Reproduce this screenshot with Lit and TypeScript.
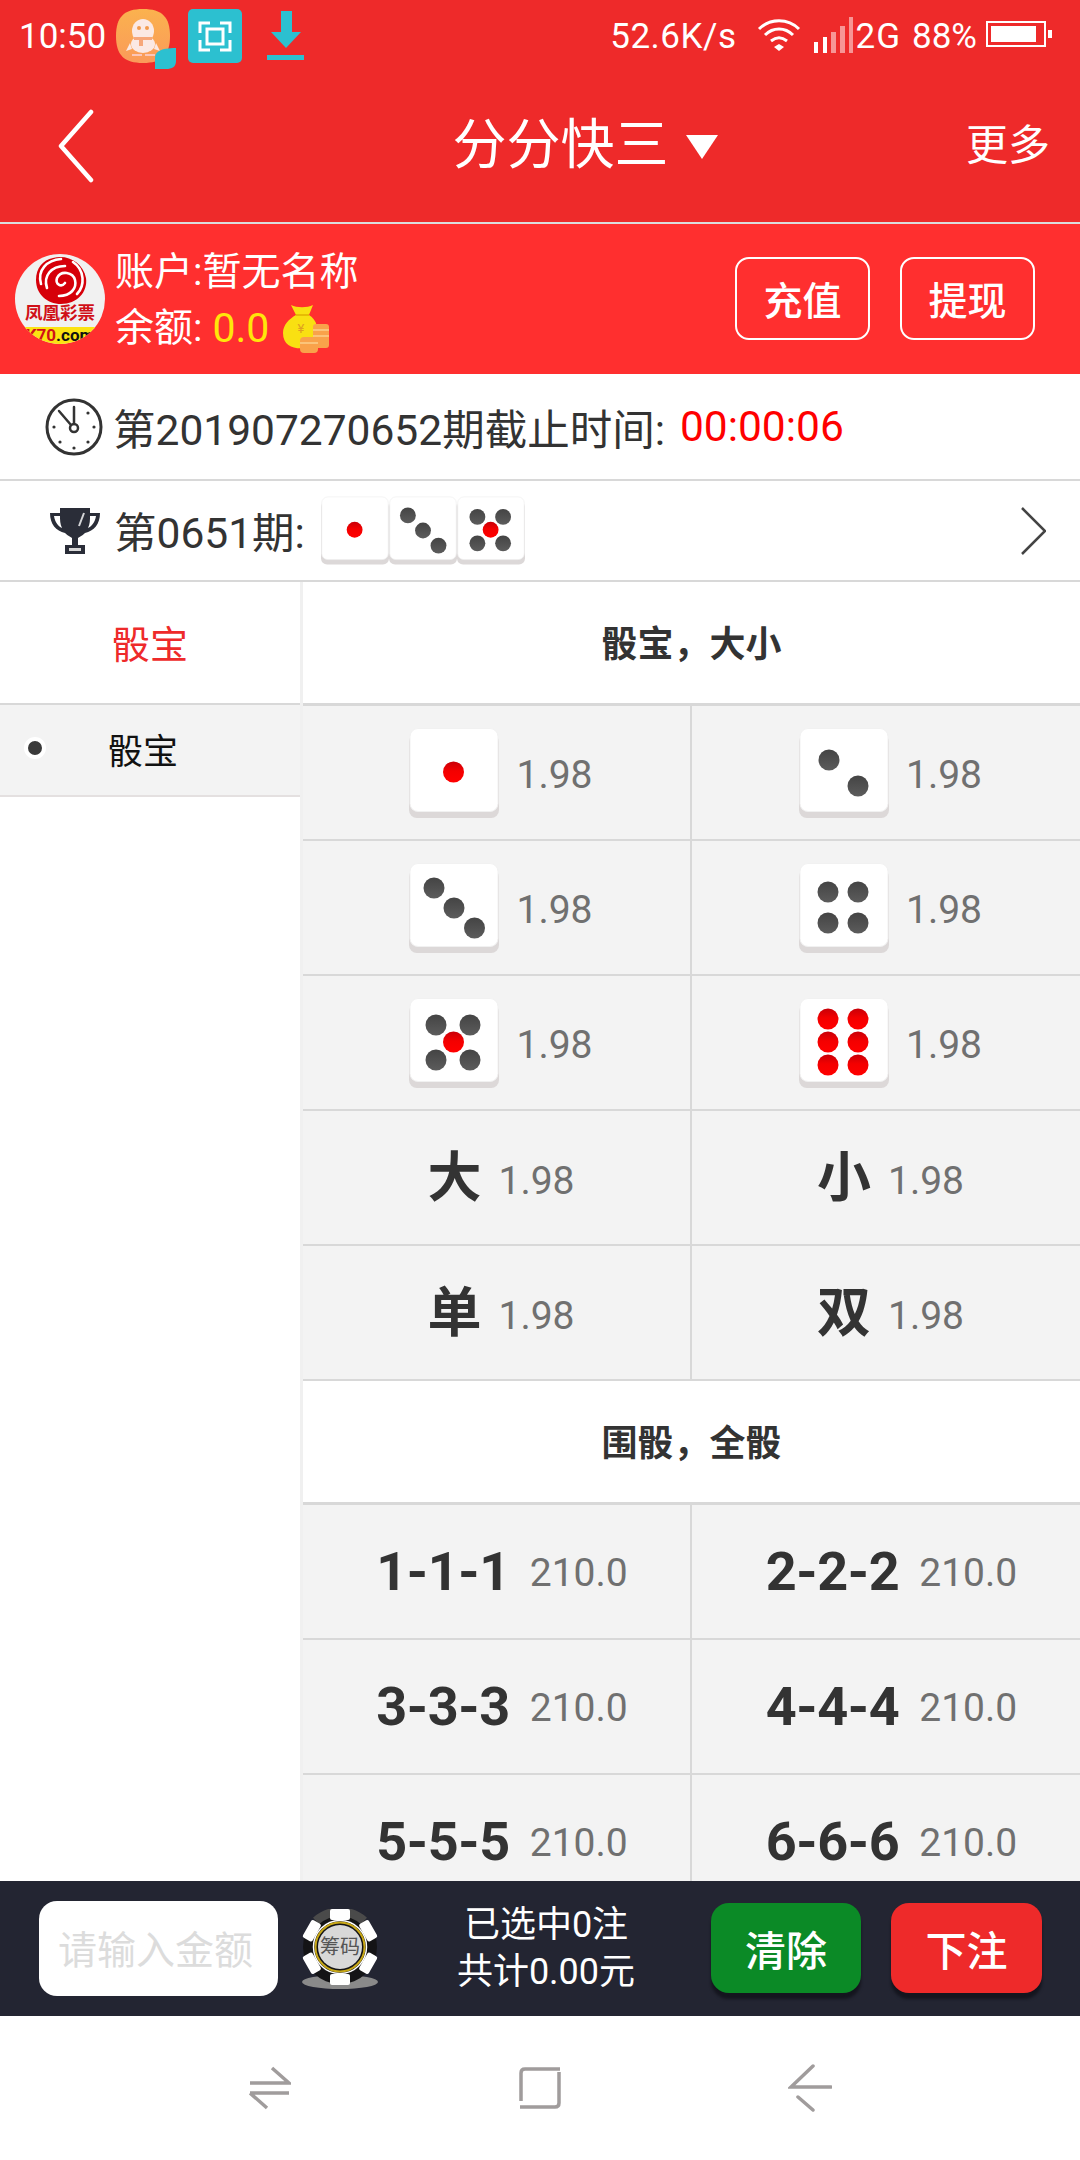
import { LitElement, html, css, svg } from "lit";
import { customElement } from "lit/decorators.js";

const PIPS: Record<number, [number, number, boolean][]> = {
  1: [[44.5, 44, true]],
  2: [[30, 32, false], [59, 58, false]],
  3: [[25, 25, false], [45, 45, false], [65.5, 65, false]],
  4: [[29, 29, false], [59, 29, false], [29, 60, false], [59, 60, false]],
  5: [[27, 27, false], [61, 27, false], [44.5, 44, true], [27, 62, false], [61, 62, false]],
  6: [[29, 21, true], [59, 21, true], [29, 44, true], [59, 44, true], [29, 67, true], [59, 67, true]],
};

function die(n: number, cls: string) {
  return html`<svg class=${cls} viewBox="0 0 90 90" aria-hidden="true">
    <defs>
      <linearGradient id="pr" x1="0" y1="0" x2="0" y2="1"><stop offset="0" stop-color="#c80008"/><stop offset=".45" stop-color="#f40000"/><stop offset="1" stop-color="#ff0000"/></linearGradient>
      <linearGradient id="pd" x1="0" y1="0" x2="0" y2="1"><stop offset="0" stop-color="#444"/><stop offset="1" stop-color="#5c5c5c"/></linearGradient>
    </defs>
    <rect x="0" y="6" width="90" height="84" rx="8" fill="#dcd8d8"/>
    <rect x="1" y="0.5" width="88" height="83" rx="8" fill="#fff" stroke="#f1f1f1"/>
    ${PIPS[n].map(([x, y, red]) => svg`<circle cx=${x} cy=${y} r="10.5" fill=${red ? "url(#pr)" : "url(#pd)"}/>`)}
  </svg>`;
}

const CHIP_NOTCH = [0, 60, 120, 180, 240, 300];

@customElement("app-root")
export class AppRoot extends LitElement {
  static styles = css`
    :host {
      display: block;
      width: 1080px;
      height: 2160px;
      font-family: Roboto, "Noto Sans CJK SC", sans-serif;
      color: #333;
      background: #fff;
      overflow: hidden;
    }
    .app { display: flex; flex-direction: column; height: 2160px; }
    svg { display: block; flex: none; }

    .top { background: #ee2a2a; border-bottom: 2px solid #dcdcdc; color: #fff; height: 222px; flex: none; }
    .status { display: flex; align-items: center; height: 70px; padding: 0 28px 0 19px; font-size: 35px; }
    .time { width: 86px; margin-top: 4px; line-height: 40px; }
    .qq { margin-left: 11px; margin-top: 8px; }
    .scan { margin-left: 12px; margin-top: 2px; }
    .dl { margin-left: 25px; margin-top: 4px; }
    .st-right { margin-left: auto; display: flex; align-items: center; line-height: 40px; padding-top: 4px; }
    .speed { letter-spacing: 0.5px; }
    .wifi { margin-left: 20px; margin-top: -6px; }
    .sig { margin-left: 13px; margin-top: -4px; }
    .g2 { margin-left: 3px; letter-spacing: 1px; }
    .pct { margin-left: 11px; }
    .batt { margin-left: 9px; margin-top: -6px; }

    .bar { display: grid; grid-template-columns: 1fr auto 1fr; align-items: center; height: 152px; padding: 0 30px 14px 58px; }
    .title { display: flex; align-items: center; font-size: 54px; line-height: 70px; margin-left: 62px; }
    .tri { margin-left: 17px; margin-top: 2px; }
    .more { justify-self: end; font-size: 42px; line-height: 56px; }

    .acct { flex: none; height: 150px; background: #ff2f2f; color: #fff; display: flex; align-items: center; padding: 0 45px 0 15px; box-sizing: border-box; }
    .acct-text { margin-left: 10px; font-size: 39px; line-height: 56px; margin-top: 2px; }
    .bal { display: flex; align-items: center; }
    .bal b { font-weight: 400; color: #ffe60a; margin-left: 10px; font-size: 41px; }
    .bag { margin-left: 14px; margin-top: 2px; }
    .acct-btns { margin-left: auto; display: flex; gap: 30px; margin-top: -2px; }
    .outline { width: 135px; height: 83px; box-sizing: border-box; border: 2px solid #fff; border-radius: 14px; display: flex; align-items: center; justify-content: center; font-size: 39px; font-weight: 500; }

    .timer { flex: none; height: 107px; box-sizing: border-box; border-bottom: 2px solid #d8d8d8; display: flex; align-items: center; padding-left: 45px; font-size: 42.5px; }
    .timer svg { margin-right: 10px; }
    .timer .red { color: #f00; margin-left: 15px; }
    .last { flex: none; height: 101px; box-sizing: border-box; border-bottom: 2px solid #d8d8d8; display: flex; align-items: center; padding: 0 34px 0 50px; font-size: 42.5px; }
    .last .cup { margin-right: 14px; }
    .last .issue { margin-top: -3px; }
    .last .dice { display: flex; margin-left: 16px; }
    .die-sm { width: 68px; height: 69px; }
    .last .chev { margin-left: auto; }

    .main { flex: 1; min-height: 0; display: flex; overflow: hidden; }
    .side { width: 303px; flex: none; box-sizing: border-box; border-right: 3px solid #f0f0f0; }
    .tab { height: 123px; box-sizing: border-box; border-bottom: 2px solid #d8d8d8; display: flex; align-items: center; justify-content: center; color: #ee2a2a; font-size: 38px; padding-bottom: 3px; }
    .item { height: 92px; box-sizing: border-box; background: #f3f3f3; border-bottom: 2px solid #e4e0e0; display: flex; align-items: center; padding: 0 0 4px 24px; font-size: 35px; color: #111; }
    .dot { width: 22px; height: 22px; box-sizing: border-box; border-radius: 50%; background: #3a3a3a; border: 4.5px solid #fff; }
    .item span { margin-left: 62px; }

    .content { flex: 1; min-width: 0; }
    .head { height: 124px; box-sizing: border-box; border-bottom: 3px solid #d8d8d8; display: flex; align-items: center; justify-content: center; font-size: 36px; font-weight: 700; padding-bottom: 3px; }
    .grid { display: grid; grid-template-columns: 389px 388px; }
    .cell { height: 135px; box-sizing: border-box; background: #f3f3f3; border-bottom: 2px solid #d8d8d8; border-right: 2px solid #d8d8d8; display: flex; align-items: center; justify-content: center; }
    .cell:nth-child(2n) { border-right: none; }
    .die-lg { width: 90px; height: 90px; }
    .odds { color: #707070; font-size: 39px; line-height: 50px; margin-top: 4px; }
    .die-cell { padding-left: 9px; }
    .die-cell .odds { margin-left: 17px; }
    .big { font-size: 54px; font-weight: 700; line-height: 70px; color: #333; }
    .word-cell { padding: 2px 0 0 9px; }
    .word-cell .odds { margin-left: 17px; }
    .num-cell { padding-left: 11px; }
    .num-cell .big { letter-spacing: -0.4px; }
    .num-cell .odds { margin-left: 20px; margin-top: 2px; }

    .foot { flex: none; height: 135px; background: #232532; display: flex; align-items: center; color: #fff; }
    .input { margin-left: 39px; width: 239px; height: 95px; box-sizing: border-box; background: #fff; border-radius: 18px; color: #dcdcdc; font-size: 39px; display: flex; align-items: center; padding: 0 0 4px 19px; }
    .chip { margin-left: 24px; }
    .sum { width: 333px; box-sizing: border-box; padding-left: 3px; text-align: center; font-size: 36px; line-height: 47px; }
    .btn { width: 150px; height: 90px; border-radius: 18px; display: flex; align-items: center; justify-content: center; font-size: 41px; font-weight: 500; box-shadow: 0 6px 3px rgba(10, 10, 15, .55); margin-top: -2px; }
    .green { background: #0b8a26; }
    .redbtn { background: #ee2a2a; margin-left: 30px; width: 151px; }

    .nav { flex: none; height: 144px; background: #fff; display: grid; grid-template-columns: repeat(3, 270px); padding: 0 135px; align-items: center; justify-items: center; }
  `;

  render() {
    const dice = [1, 2, 3, 4, 5, 6];
    const words = ["大", "小", "单", "双"];
    const triples = ["1-1-1", "2-2-2", "3-3-3", "4-4-4", "5-5-5", "6-6-6"];
    return html`<div class="app">
      <div class="top">
        <div class="status">
          <span class="time">10:50</span>
          <svg class="qq" width="60" height="60" viewBox="0 0 60 60" aria-hidden="true">
            <defs><linearGradient id="qqg" x1="0" y1="0" x2="0" y2="1"><stop offset="0" stop-color="#fbb24e"/><stop offset="1" stop-color="#fa9a5a"/></linearGradient></defs>
            <path d="M27 0C46 0 54 8 54 27S46 54 27 54 0 46 0 27 8 0 27 0Z" fill="url(#qqg)"/>
            <ellipse cx="27" cy="22" rx="11" ry="12" fill="#fbe9e4"/>
            <ellipse cx="27" cy="35" rx="12" ry="9" fill="#fbe9e4"/>
            <path d="M14 34l-4 8 6-2ZM40 34l4 8-6-2Z" fill="#fbe9e4"/>
            <circle cx="23" cy="19" r="2" fill="#f39a4c"/><circle cx="31" cy="19" r="2" fill="#f39a4c"/>
            <path d="M18 28h18v3h-9v6h-4v-6h-5Z" fill="#f7a77a"/>
            <path d="M16 46h10M29 46h10" stroke="#fbc6ba" stroke-width="2"/>
            <path d="M39 49C39 43 44 39 60 39V52C60 58 56 60 50 60H39Z" fill="#2cc0d0"/>
          </svg>
          <svg class="scan" width="54" height="54" viewBox="0 0 54 54" aria-hidden="true">
            <rect width="54" height="54" rx="5" fill="#2cc0d0"/>
            <path d="M22 14H12V24M32 14H42V24M12 31V41H22M42 31V41H32" fill="none" stroke="#fff" stroke-width="3"/>
            <rect x="19" y="20" width="16" height="15" fill="none" stroke="#fff" stroke-width="3"/>
          </svg>
          <svg class="dl" width="37" height="52" viewBox="0 0 37 52" aria-hidden="true">
            <path d="M14 0H25V21H34L19 37 4 21H14Z" fill="#2cc0d0"/>
            <rect x="0" y="44" width="37" height="5" fill="#2cc0d0"/>
          </svg>
          <div class="st-right">
            <span class="speed">52.6K/s</span>
            <svg class="wifi" width="44" height="34" viewBox="0 0 44 34" aria-hidden="true">
              <path d="M2 12C13 1 31 1 42 12M8 18C16 10 28 10 36 18M14 24C19 20 25 20 30 24" fill="none" stroke="#fff" stroke-width="3"/>
              <path d="M22 27l5 3-5 4-5-4Z" fill="#fff"/>
            </svg>
            <svg class="sig" width="39" height="36" viewBox="0 0 39 36" aria-hidden="true">
              <rect x="0" y="25" width="4" height="11" fill="#fff"/>
              <rect x="9" y="20" width="4" height="16" fill="#fff"/>
              <rect x="17" y="15" width="5" height="21" fill="#fff" opacity=".5"/>
              <rect x="26" y="9" width="5" height="27" fill="#fff" opacity=".5"/>
              <rect x="35" y="0" width="4" height="36" fill="#fff" opacity=".5"/>
            </svg>
            <span class="g2">2G</span>
            <span class="pct">88%</span>
            <svg class="batt" width="66" height="26" viewBox="0 0 66 26" aria-hidden="true">
              <rect x="1" y="1" width="58" height="24" fill="none" stroke="#fff" stroke-width="2"/>
              <rect x="5" y="5" width="45" height="16" fill="#fff"/>
              <rect x="62" y="9" width="4" height="8" fill="#fff"/>
            </svg>
          </div>
        </div>
        <div class="bar">
          <svg width="36" height="74" viewBox="0 0 36 74" aria-hidden="true">
            <path d="M33 3L3 37 33 71" fill="none" stroke="#fff" stroke-width="4.5" stroke-linecap="round" stroke-linejoin="round"/>
          </svg>
          <div class="title">分分快三
            <svg class="tri" width="32" height="24" viewBox="0 0 32 24" aria-hidden="true"><path d="M0 0H32L16 24Z" fill="#fff"/></svg>
          </div>
          <div class="more">更多</div>
        </div>
      </div>

      <div class="acct">
        <svg width="90" height="90" viewBox="0 0 90 90" aria-hidden="true">
          <defs><clipPath id="lc"><circle cx="45" cy="45" r="45"/></clipPath></defs>
          <g clip-path="url(#lc)">
            <rect width="90" height="90" fill="#f1f1f1"/>
            <rect y="73" width="90" height="17" fill="#fbe312"/>
            <path d="M38 4C52 0 68 8 71 24 73 38 62 50 46 50 32 50 21 40 21 26 21 14 28 6 38 4Z" fill="#d6000a"/>
            <path d="M26 30C22 16 32 6 46 5M32 34C28 22 36 12 50 12M58 8C70 16 70 32 62 40M44 42C56 42 62 34 60 26 58 18 46 16 42 24 40 30 46 34 50 29" fill="none" stroke="#fff" stroke-width="2.6" stroke-linecap="round"/>
            <text x="45" y="65" text-anchor="middle" font-size="17.5" font-weight="700" fill="#d01018" font-family="'Noto Sans CJK SC',sans-serif">凤凰彩票</text>
            <text x="45" y="87" text-anchor="middle" font-size="17" font-weight="700" font-family="Roboto,sans-serif"><tspan fill="#d01018">K70</tspan><tspan fill="#111">.com</tspan></text>
          </g>
        </svg>
        <div class="acct-text">
          <div>账户:暂无名称</div>
          <div class="bal">余额:<b>0.0</b>
            <svg class="bag" width="46" height="48" viewBox="0 0 46 48" aria-hidden="true">
              <path d="M8 0C14 3 24 3 30 0L26 10C34 15 36 24 33 32L28 42C16 45 0 44 0 28 0 20 6 14 13 10Z" fill="#f9e012"/>
              <path d="M13 10H26" stroke="#e0b000" stroke-width="1.5"/>
              <text x="18" y="28" text-anchor="middle" font-size="13" fill="#e0a020" font-family="Roboto,sans-serif">¥</text>
              <rect x="30" y="19" width="16" height="24" rx="3" fill="#f9a24a"/>
              <rect x="17" y="32" width="18" height="16" rx="4" fill="#f9a24a"/>
              <path d="M30 25h16M30 31h16M17 38h18" stroke="#fbd08a" stroke-width="1.5"/>
            </svg>
          </div>
        </div>
        <div class="acct-btns">
          <div class="outline">充值</div>
          <div class="outline">提现</div>
        </div>
      </div>

      <div class="timer">
        <svg width="58" height="58" viewBox="0 0 58 58" aria-hidden="true">
          <circle cx="29" cy="29" r="27" fill="none" stroke="#333" stroke-width="3"/>
          <circle cx="29" cy="30" r="4" fill="none" stroke="#333" stroke-width="2.5"/>
          <path d="M29 26V9M26 27L14 13" stroke="#333" stroke-width="2.5" stroke-linecap="round"/>
          <g fill="#333">
            <circle cx="43" cy="15" r="1.6"/><circle cx="49" cy="29" r="1.6"/><circle cx="43" cy="44" r="1.6"/>
            <circle cx="29" cy="50" r="1.6"/><circle cx="15" cy="44" r="1.6"/><circle cx="9" cy="29" r="1.6"/>
          </g>
        </svg>
        第201907270652期截止时间:<span class="red">00:00:06</span>
      </div>

      <div class="last">
        <svg class="cup" width="50" height="46" viewBox="0 0 50 46" aria-hidden="true">
          <path d="M10 0H40V5H50C50 16 44 23 35 25C32 28 29 29 28 30V37H35V46H15V37H22V30C21 29 18 28 15 25 6 23 0 16 0 5H10ZM4 8C5 14 8 18 12 20 10 16 10 12 10 8ZM46 8H40C40 12 40 16 38 20 42 18 45 14 46 8Z" fill="#2a2d38"/>
          <path d="M34 5L29 18" stroke="#fff" stroke-width="2" opacity=".8"/>
          <rect x="19" y="40" width="12" height="3" fill="#d8d8d8"/>
        </svg>
        <span class="issue">第0651期:</span>
        <div class="dice">${die(1, "die-sm")}${die(3, "die-sm")}${die(5, "die-sm")}</div>
        <svg class="chev" width="26" height="50" viewBox="0 0 26 50" aria-hidden="true">
          <path d="M2 2L25 25 2 48" fill="none" stroke="#444" stroke-width="2.5"/>
        </svg>
      </div>

      <div class="main">
        <div class="side">
          <div class="tab">骰宝</div>
          <div class="item"><i class="dot"></i><span>骰宝</span></div>
        </div>
        <div class="content">
          <div class="head">骰宝，大小</div>
          <div class="grid">
            ${dice.map((n) => html`<div class="cell die-cell">${die(n, "die-lg")}<span class="odds">1.98</span></div>`)}
            ${words.map((w) => html`<div class="cell word-cell"><span class="big">${w}</span><span class="odds">1.98</span></div>`)}
          </div>
          <div class="head">围骰，全骰</div>
          <div class="grid">
            ${triples.map((t) => html`<div class="cell num-cell"><span class="big">${t}</span><span class="odds">210.0</span></div>`)}
          </div>
        </div>
      </div>

      <div class="foot">
        <div class="input">请输入金额</div>
        <svg class="chip" width="76" height="80" viewBox="0 0 76 80" aria-hidden="true">
          <ellipse cx="38" cy="73" rx="38" ry="7" fill="#8a8a8a"/>
          <circle cx="38" cy="38" r="37" fill="#141416"/>
          <path d="M14 12A36 36 0 0 1 62 12" fill="none" stroke="#4a4a4a" stroke-width="9"/>
          ${CHIP_NOTCH.map((a) => svg`<rect x="28" y="0" width="20" height="11" rx="2" fill="#fff" transform="rotate(${a} 38 38)"/>`)}
          <circle cx="38" cy="38" r="26.5" fill="#141416" stroke="#fff" stroke-width="1.5"/>
          <circle cx="38" cy="38" r="24.5" fill="#141416" stroke="#c8a818" stroke-width="2"/>
          <circle cx="38" cy="38" r="22" fill="#d8d8d8"/>
          <text x="38" y="45" text-anchor="middle" font-size="20" fill="#555" font-family="'Noto Sans CJK SC',sans-serif">筹码</text>
        </svg>
        <div class="sum"><div>已选中0注</div><div>共计0.00元</div></div>
        <div class="btn green">清除</div>
        <div class="btn redbtn">下注</div>
      </div>

      <div class="nav">
        <svg width="42" height="44" viewBox="0 0 42 44" aria-hidden="true">
          <path d="M23 2L40 17H1M1 27H40M1 27L18 42" fill="none" stroke="#a09c9c" stroke-width="3.5"/>
        </svg>
        <svg width="42" height="42" viewBox="0 0 42 42" aria-hidden="true">
          <path d="M41 2H6Q2 2 2 6V34M1 40H36Q40 40 40 36V5" fill="none" stroke="#a09c9c" stroke-width="3.5"/>
        </svg>
        <svg width="44" height="48" viewBox="0 0 44 48" aria-hidden="true">
          <path d="M25 2L3 23H43M10 33L25 46" fill="none" stroke="#a09c9c" stroke-width="3.5" stroke-linecap="round"/>
        </svg>
      </div>
    </div>`;
  }
}
